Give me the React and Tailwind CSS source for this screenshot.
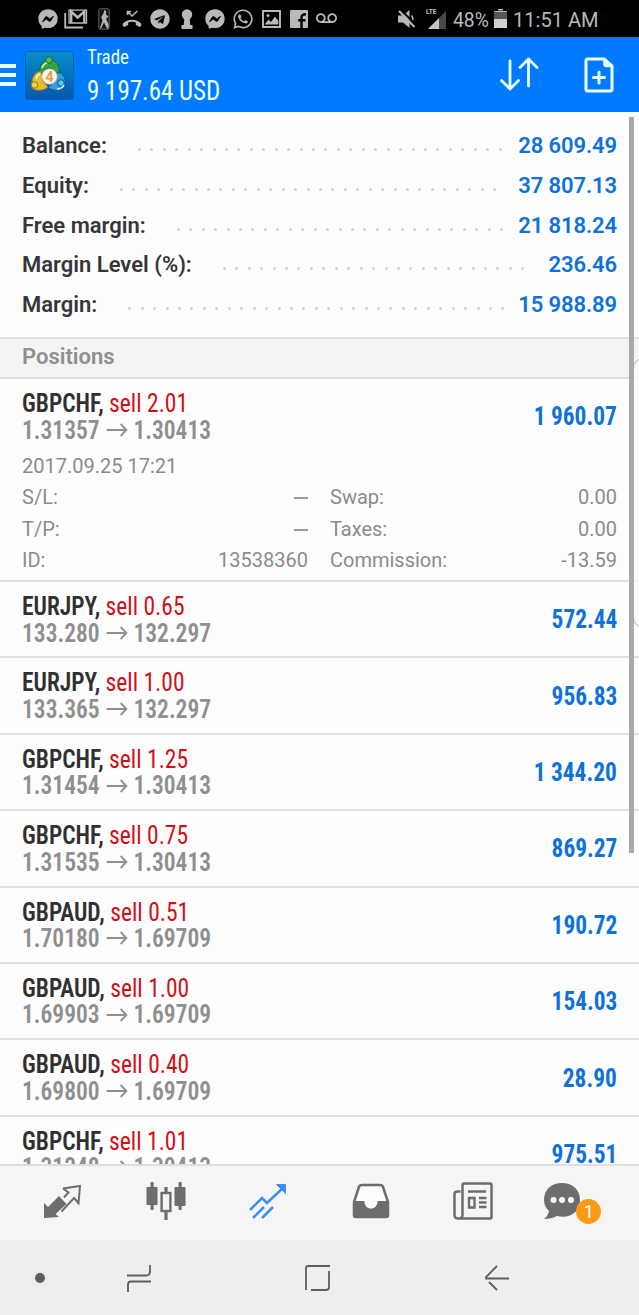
import React from "react";
import { FaFacebookMessenger, FaTelegram, FaWhatsapp } from "react-icons/fa";
import { MdVoicemail } from "react-icons/md";

const summary = [
  { label: "Balance:", value: "28 609.49", dots: 30 },
  { label: "Equity:", value: "37 807.13", dots: 31 },
  { label: "Free margin:", value: "21 818.24", dots: 27 },
  { label: "Margin Level (%):", value: "236.46", dots: 25 },
  { label: "Margin:", value: "15 988.89", dots: 31 },
];

const positions = [
  { symbol: "GBPCHF", lot: "2.01", open: "1.31357", now: "1.30413", profit: "1 960.07", expanded: true },
  { symbol: "EURJPY", lot: "0.65", open: "133.280", now: "132.297", profit: "572.44" },
  { symbol: "EURJPY", lot: "1.00", open: "133.365", now: "132.297", profit: "956.83" },
  { symbol: "GBPCHF", lot: "1.25", open: "1.31454", now: "1.30413", profit: "1 344.20" },
  { symbol: "GBPCHF", lot: "0.75", open: "1.31535", now: "1.30413", profit: "869.27" },
  { symbol: "GBPAUD", lot: "0.51", open: "1.70180", now: "1.69709", profit: "190.72" },
  { symbol: "GBPAUD", lot: "1.00", open: "1.69903", now: "1.69709", profit: "154.03" },
  { symbol: "GBPAUD", lot: "0.40", open: "1.69800", now: "1.69709", profit: "28.90" },
  { symbol: "GBPCHF", lot: "1.01", open: "1.31248", now: "1.30413", profit: "975.51" },
];

const details = [
  ["S/L:", "–", "Swap:", "0.00"],
  ["T/P:", "–", "Taxes:", "0.00"],
  ["ID:", "13538360", "Commission:", "-13.59"],
];

function GmailIcon() {
  return (
    <svg width="24" height="20" viewBox="0 0 24 20" fill="none" stroke="currentColor">
      <path d="M1.2 4V18.5H19" strokeWidth="1.8" />
      <path d="M5 1.2H22.5V14H5Z" strokeWidth="1.3" />
      <path d="M7.2 14V2.5L13.7 8.5L20.3 2.5V14" strokeWidth="2.4" />
    </svg>
  );
}

function NbaIcon() {
  return (
    <svg width="12" height="22" viewBox="0 0 12 22">
      <rect x="0.8" y="0.8" width="10.4" height="20.4" rx="1.5" fill="#141414" stroke="#666" />
      <path d="M6.5 2L8.3 3.2L7.8 6L10.5 9L8 10.5L9 13L10.6 16V20.5H9L6 14.5L3 20.5H1.8L4.5 12.5L3.2 9L5.2 6Z" fill="#b5b5b5" />
    </svg>
  );
}

function MissedCallIcon() {
  return (
    <svg width="20" height="18" viewBox="0 0 20 18">
      <path d="M1 16Q0 14.500 1 13.500C6 8.500 14 8.500 19 13.500Q20 14.500 19 16L17.800 17L13.800 15V12.400Q10 11.200 6.200 12.400V15L2.200 17Z" fill="currentColor" />
      <path d="M5.500 5V1.500H9M5.800 1.800L10 6L15.500 1" fill="none" stroke="currentColor" strokeWidth="1.600" />
    </svg>
  );
}

function KeyholeIcon() {
  return (
    <svg width="14" height="20" viewBox="0 0 14 20" fill="currentColor">
      <circle cx="7" cy="5.5" r="5.2" />
      <path d="M4.5 8H9.5L10.3 16H12.5V20H1.5V16H3.7Z" />
    </svg>
  );
}

function PictureIcon() {
  return (
    <svg width="19" height="18" viewBox="0 0 19 18">
      <path d="M1 1H18V17H1Z" fill="none" stroke="currentColor" strokeWidth="1.9" />
      <circle cx="6" cy="5.5" r="1.5" fill="currentColor" />
      <path d="M3 14L6.5 9.5L9 12L13 6.5L16.3 11V14.5H3Z" fill="currentColor" />
    </svg>
  );
}

function FacebookIcon() {
  return (
    <svg width="18" height="18" viewBox="0 0 18 18">
      <rect width="18" height="18" rx="1" fill="currentColor" />
      <path d="M11.500 18V7.500Q11.500 4 16 4.300M8.300 10.200H15.500" fill="none" stroke="#000" strokeWidth="2.400" />
    </svg>
  );
}

function MutedIcon() {
  return (
    <svg width="19" height="20" viewBox="0 0 19 20">
      <path d="M1 6.500H6L12.500 1V19L6 13.500H1Z" fill="currentColor" />
      <path d="M14.500 6.500Q16.500 8.500 15.500 11" fill="none" stroke="currentColor" strokeWidth="1.500" />
      <path d="M3.500 0.500L19 16" stroke="#000" strokeWidth="2" />
      <path d="M2 2L17.500 18" stroke="currentColor" strokeWidth="2" />
    </svg>
  );
}

function StatusBar() {
  const icons = [
    <FaFacebookMessenger size={20} />,
    <GmailIcon />,
    <NbaIcon />,
    <MissedCallIcon />,
    <FaTelegram size={20} />,
    <KeyholeIcon />,
    <FaFacebookMessenger size={20} />,
    <FaWhatsapp size={22} />,
    <PictureIcon />,
    <FacebookIcon />,
    <MdVoicemail size={21} />,
  ];
  return (
    <div className="flex h-[37px] shrink-0 items-center bg-black pl-[34px] text-[#b9b9b9]">
      {icons.map((icon, i) => (
        <div key={i} className="flex w-[27.9px] shrink-0 justify-center">
          {icon}
        </div>
      ))}
      <div className="ml-[56px] shrink-0">
        <MutedIcon />
      </div>
      <svg className="ml-2.5 shrink-0" width="22" height="22" viewBox="0 0 22 22">
        <path d="M20 3V21H2Z" fill="#4a4a4a" />
        <path d="M13 10V21H2Z" fill="#c4c4c4" />
        <text x="0" y="6" fontSize="6.5" fontWeight="700" fontFamily="Roboto" fill="#c4c4c4">LTE</text>
      </svg>
      <span className="ml-[5px] w-[38px] origin-left scale-x-[0.92] pt-[2px] text-[21px] leading-6">48%</span>
      <svg className="ml-[3px] shrink-0" width="13" height="19" viewBox="0 0 13 19">
        <path d="M4 0H9V2H13V19H0V2H4Z" fill="#555" />
        <path d="M0 10H13V19H0Z" fill="#d0d0d0" />
        <path d="M4 0.5H9M0.5 2.5H12.5" stroke="#bbb" fill="none" />
      </svg>
      <span className="ml-[6px] origin-left scale-x-[0.955] whitespace-nowrap pt-[2px] text-[21px] leading-6">11:51 AM</span>
    </div>
  );
}

function AppLogo() {
  return (
    <svg width="49" height="49" viewBox="0 0 49 49">
      <defs>
        <linearGradient id="tile" x1="0" y1="0" x2="0" y2="1">
          <stop offset="0" stopColor="#078ec9" />
          <stop offset="1" stopColor="#0758ae" />
        </linearGradient>
      </defs>
      <rect x="0.5" y="0.5" width="48" height="48" rx="2" fill="url(#tile)" stroke="#0a61bd" />
      <path d="M15 24C13 15 18 9 24 8C31 9 36 15 34 23L29 20C28 16 20 16 18 21Z" fill="#36a447" stroke="#126b37" />
      <path d="M16 20C10 21 7 26 7 32L8 38C12 40 19 40 23 36L18 30Z" fill="#e6bd32" stroke="#9d7413" />
      <path d="M33 21C39 22 41 28 40 35C37 41 29 40 23 37L30 30Z" fill="#2e9de4" stroke="#0b559b" />
      <circle cx="24" cy="9" r="3.3" fill="#4ebd50" stroke="#126b37" />
      <circle cx="9.5" cy="34" r="3.3" fill="#e4d344" stroke="#9d7413" />
      <circle cx="36" cy="32" r="3.3" fill="#62c2ee" stroke="#0b559b" />
      <path d="M11 28Q12 24 15 23M17 17Q18 13 22 12M32 38Q37 38 39 34" stroke="#f3f6cf" strokeWidth="1.5" fill="none" />
      <circle cx="24.5" cy="25.5" r="7.8" fill="#faf5eb" stroke="#b9aa82" strokeWidth="0.8" />
      <text x="24.5" y="30.500" textAnchor="middle" fontSize="14" fontWeight="600" fontFamily="Roboto" fill="#e29a43">4</text>
    </svg>
  );
}

function Header() {
  return (
    <header className="flex h-[75px] shrink-0 items-center border-t border-[#2a6dbb] bg-[#007aff] text-[#eaffff]">
      <div className="flex w-4 flex-col gap-[5px]">
        <div className="h-1 bg-[#eaffff]" />
        <div className="h-1 bg-[#eaffff]" />
        <div className="h-1 bg-[#eaffff]" />
      </div>
      <div className="ml-[9px]">
        <AppLogo />
      </div>
      <div className="ml-[13px] flex-1 origin-left scale-x-[0.925] pt-[2px] font-stretch-[75%]">
        <div className="text-[20.500px] leading-6">Trade</div>
        <div className="pt-1.5 text-[27px] leading-8">9 197.64 USD</div>
      </div>
      <svg width="40" height="36" viewBox="0 0 40 36" fill="none" stroke="currentColor" strokeWidth="2.800" strokeLinecap="round" strokeLinejoin="round">
        <path d="M11 4V32M2.5 23.5L11 32L19.5 23.5M29.5 29V2M21 10.500L29.5 2L38 10.500" />
      </svg>
      <svg className="mr-[25px] ml-[45px]" width="30" height="36" viewBox="0 0 30 36" fill="none" stroke="currentColor" strokeWidth="3" strokeLinecap="round" strokeLinejoin="round">
        <path d="M4 2H20L28 9V32Q28 34 26 34H4Q2 34 2 32V4Q2 2 4 2Z" />
        <path d="M20 2V7Q20 9.500 22.500 9.500H28Z" fill="currentColor" strokeWidth="1.500" />
        <path d="M15 15V26M9.500 20.500H20.500" />
      </svg>
    </header>
  );
}

function Summary() {
  return (
    <div className="h-[225px] shrink-0 px-[22px] pt-[14px] text-[22px] font-semibold">
      {summary.map((row) => (
        <div key={row.label} className="flex h-[39.7px] items-center">
          <span className="text-[#363639]">{row.label}</span>
          <span className="ml-[31px] flex pt-[8px]">
            {Array.from({ length: row.dots }, (_, i) => (
              <i key={i} className="mr-[9.45px] size-[3px] rounded-full bg-[#d3d3d3]" />
            ))}
          </span>
          <span className="ml-auto tracking-[-0.1px] text-[#0f72d8]">{row.value}</span>
        </div>
      ))}
    </div>
  );
}

function Details() {
  return (
    <div className="pt-[7px] text-[20px] leading-[31.4px] text-[#8b8b8b]">
      <div>2017.09.25 17:21</div>
      {details.map(([left, leftValue, right, rightValue]) => (
        <div key={left} className="flex">
          <span>{left}</span>
          <span className="ml-auto">
            {leftValue === "–" ? <i className="mb-[5px] inline-block h-0.5 w-3.5 bg-[#9b9b9b]" /> : leftValue}
          </span>
          <span className="ml-[22px] flex w-[287px] justify-between">
            <span>{right}</span>
            <span>{rightValue}</span>
          </span>
        </div>
      ))}
    </div>
  );
}

function Position({ item }) {
  return (
    <div className={item.expanded ? "h-[203px] shrink-0 border-b-2 border-[#e1e1e1] px-[22px] pt-[12px]" : "h-[76.4px] shrink-0 border-b-2 border-[#e1e1e1] px-[22px] pt-[12px]"}>
      <div className="flex items-center justify-between text-[25px] leading-[26.500px] font-stretch-[75%]">
        <div className="origin-left scale-x-[0.94]">
          <div>
            <span className="font-semibold text-[#303030]">{item.symbol},</span>{" "}
            <span className="text-[#cf1117]">sell {item.lot}</span>
          </div>
          <div className="flex items-center font-semibold text-[#8f8f8f]">
            {item.open}
            <svg className="mx-[6px] -mt-0.5" width="24" height="16" viewBox="0 0 24 16" fill="none" stroke="currentColor" strokeWidth="2">
              <path d="M1 8H22M16 2L22 8L16 14" />
            </svg>
            {item.now}
          </div>
        </div>
        <span className="origin-right scale-x-[0.935] font-bold text-[#0f72d8]">{item.profit}</span>
      </div>
      {item.expanded && <Details />}
    </div>
  );
}

function QuotesIcon() {
  return (
    <svg width="40" height="38" viewBox="0 0 40 38">
      <path d="M1 36V21L5 25L16 14L23.500 22L12.500 32L16 35Z" fill="#6d6d6d" />
      <path d="M20 6.500L37 4L35.500 21L31 16L18.500 29.500M20 6.500L25.500 10.500L21 15.500" fill="none" stroke="#6d6d6d" strokeWidth="2" />
    </svg>
  );
}

function ChartIcon() {
  return (
    <svg width="40" height="40" viewBox="0 0 40 40" fill="#6d6d6d">
      <rect x="0.500" y="6" width="11" height="18" rx="1" />
      <rect x="4.500" y="1" width="3.200" height="28" rx="1" />
      <rect x="28.500" y="6" width="11" height="19" rx="1" />
      <rect x="32.500" y="1" width="3.200" height="28" rx="1" />
      <path d="M18.400 6H21.600V11H18.400ZM18.400 31H21.600V39H18.400Z" />
      <rect x="15.600" y="12" width="8.800" height="18" fill="none" stroke="#6d6d6d" strokeWidth="2.400" />
    </svg>
  );
}

function TradeIcon() {
  return (
    <svg width="38" height="38" viewBox="0 0 38 38" fill="none" stroke="#3b90ea" strokeWidth="2.500">
      <path d="M1 28L13 16L18 21L35 5M4 36L15 25M13 36L24 25" />
      <path d="M27.500 2.500H36.500V11.500Z" fill="#3b90ea" strokeWidth="1" />
    </svg>
  );
}

function HistoryIcon() {
  return (
    <svg width="38" height="36" viewBox="0 0 38 36">
      <path d="M2 19L7 4Q7.500 2 10 2H28Q30.500 2 31 4L36 19V32Q36 34 34 34H4Q2 34 2 32Z" fill="#fdfdfd" stroke="#6d6d6d" strokeWidth="2.500" strokeLinejoin="round" />
      <path d="M1 18H12.500C12 28 26 28 25.500 18H37V32Q37 35 34 35H4Q1 35 1 32Z" fill="#6d6d6d" />
    </svg>
  );
}

function NewsIcon() {
  return (
    <svg width="40" height="38" viewBox="0 0 40 38" fill="none" stroke="#6d6d6d" strokeWidth="2.500">
      <path d="M7.500 9.500H4.500Q1.500 9.500 1.500 12V33Q1.500 36.500 5 36.500H37Q38.500 36.500 38.500 35V3Q38.500 1.500 37 1.500H11Q9.500 1.500 9.500 3V33Q9.500 36.500 5.500 36.500" />
      <path d="M15 9.500H33M26 16H33.500M26 20.500H33.500M26 25H33.500M16 16H21.500V25.500H16Z" strokeWidth="2.400" />
    </svg>
  );
}

function ChatIcon() {
  return (
    <div className="relative mr-[27px]">
      <svg width="38" height="38" viewBox="0 0 38 38">
        <path d="M19 1C8 1 1 8 1 18C1 23 3 26 6 29Q5 34 1 37Q9 37 14 34C27 37 37 30 37 18C37 8 30 1 19 1Z" fill="#6d6d6d" />
        <circle cx="10.500" cy="18" r="3" fill="#fff" />
        <circle cx="19" cy="18" r="3" fill="#fff" />
        <circle cx="28" cy="18" r="3" fill="#fff" />
      </svg>
      <span className="absolute top-[17px] left-[33px] flex size-[25px] items-center justify-center rounded-full bg-[#ff9a17] text-[18px] text-white">1</span>
    </div>
  );
}

function BottomTabs() {
  return (
    <nav className="flex h-[76px] shrink-0 items-center border-t-2 border-[#dfdfdf] bg-[#f5f5f5] pb-[4px] pl-[12px]">
      {[<QuotesIcon />, <ChartIcon />, <TradeIcon />, <HistoryIcon />, <NewsIcon />, <ChatIcon />].map((icon, i) => (
        <div key={i} className="flex w-[102.500px] shrink-0 justify-center">
          {icon}
        </div>
      ))}
    </nav>
  );
}

function SystemNav() {
  return (
    <div className="flex h-[75px] shrink-0 items-center bg-[#eeeeee] pl-[35px] text-[#5d5d5d]">
      <div className="size-2.5 rounded-full bg-[#5f5f5f]" />
      <svg className="ml-[81px]" width="27" height="28" viewBox="0 0 27 28" fill="none" stroke="currentColor" strokeWidth="1.800">
        <path d="M1 11.500H20Q24 11.500 24 7.500V1M25 17.500H5Q2 17.500 2 20.500V28" />
      </svg>
      <svg className="ml-[151px]" width="27" height="28" viewBox="0 0 27 28" fill="none" stroke="currentColor" strokeWidth="1.800">
        <path d="M2 26V4Q2 2 4 2H26M25 7V23Q25 26 22 26H7" />
      </svg>
      <svg className="ml-[153px]" width="27" height="28" viewBox="0 0 27 28" fill="none" stroke="currentColor" strokeWidth="1.800">
        <path d="M25 14.500H2V13L13 2M5 18L13 26" />
      </svg>
    </div>
  );
}

export default function App() {
  return (
    <div className="relative flex h-[1315px] w-[639px] flex-col overflow-hidden bg-[#fdfdfd] font-[Roboto,sans-serif]">
      <StatusBar />
      <Header />
      <main className="flex h-[1052px] shrink-0 flex-col overflow-hidden">
        <Summary />
        <div className="flex h-[42px] shrink-0 items-center border-y-2 border-[#e1e1e1] bg-[#f4f4f4] px-[22px] pb-[3px] text-[22px] font-semibold text-[#8f8f92]">
          Positions
        </div>
        {positions.map((item, i) => (
          <Position key={i} item={item} />
        ))}
      </main>
      <BottomTabs />
      <SystemNav />
      {/* edge panel handle and scrollbar */}
      <div className="absolute top-[358px] left-[633px] h-[270px] w-5 rounded-[10px] border border-[#b5b5b5] bg-[#fafafa]/80" />
      <div className="absolute top-[117px] left-[629px] h-[736px] w-[5px] bg-[#a9a9a9]" />
    </div>
  );
}
